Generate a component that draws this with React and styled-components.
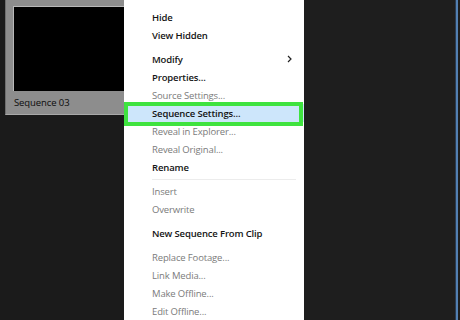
import styled, { createGlobalStyle } from 'styled-components';

const GlobalStyle = createGlobalStyle`
  html, body {
    margin: 0;
    padding: 0;
    background: #1c1c1c;
    overflow: hidden;
  }
`;

const Page = styled.div`
  display: flex;
  width: 460px;
  height: 320px;
  overflow: hidden;
  font-family: 'Open Sans', 'Noto Sans', sans-serif;
`;

const LeftSide = styled.div`
  width: 124px;
  flex-shrink: 0;
  background: #1b1b1b;
`;

const ProjectPanel = styled.div`
  margin-left: 5px;
  height: 115px;
  padding: 6px 0 0 7px;
  box-sizing: border-box;
  background: #8d8d8d;
  border-left: 1px solid #6e6e6e;
  border-bottom: 1px solid #a9a9a9;
  overflow: hidden;
`;

const Thumbnail = styled.div`
  width: 120px;
  height: 84px;
  background: #000;
  border-top: 1px solid #b8b8b8;
  border-left: 1px solid #b8b8b8;
`;

const ClipLabel = styled.div`
  margin-top: 6px;
  padding-left: 1px;
  font-size: 9.5px;
  line-height: 12px;
  letter-spacing: -0.1px;
  color: #0c0c0c;
`;

const Menu = styled.div`
  width: 180px;
  flex-shrink: 0;
  background: #fff;
  padding-top: 8px;
  box-sizing: border-box;
`;

const Item = styled.div`
  position: relative;
  display: flex;
  align-items: center;
  justify-content: space-between;
  height: 18px;
  padding: 0 12px 0 28px;
  font-size: 9.5px;
  letter-spacing: -0.15px;
  font-weight: ${p => (p.$disabled ? 400 : 600)};
  color: ${p => (p.$disabled ? '#7b7b7b' : '#141414')};
  background: ${p => (p.$active ? '#cde6fb' : 'transparent')};
  white-space: nowrap;

  &::after {
    content: '';
    display: ${p => (p.$active ? 'block' : 'none')};
    position: absolute;
    top: -2px;
    bottom: -4px;
    left: 0;
    right: 1px;
    border: 4px solid #3fe33f;
  }
`;

const Gap = styled.div`
  height: 6px;
`;

const Separator = styled.div`
  height: 6px;
  display: flex;
  align-items: center;
  padding: 0 8px 0 28px;

  &::before {
    content: '';
    flex: 1;
    height: 1px;
    background: #ececec;
  }
`;

const RightSide = styled.div`
  flex: 1;
  display: flex;
  justify-content: flex-end;
  background: #1e1e1e;
`;

const Edge = styled.div`
  width: 2px;
  margin-right: 2px;
  background: #5280b3;
  border-left: 1px solid #2a3b50;
`;

const Chevron = () => (
  <svg width="5" height="8" viewBox="0 0 5 8">
    <path d="M1 1 L4 4 L1 7" fill="none" stroke="#222" strokeWidth="1.2" />
  </svg>
);

const menu = [
  { label: 'Hide' },
  { label: 'View Hidden' },
  { gap: true },
  { label: 'Modify', sub: true },
  { label: 'Properties...' },
  { label: 'Source Settings...', disabled: true },
  { label: 'Sequence Settings...', active: true },
  { label: 'Reveal in Explorer...', disabled: true },
  { label: 'Reveal Original...', disabled: true },
  { label: 'Rename' },
  { sep: true },
  { label: 'Insert', disabled: true },
  { label: 'Overwrite', disabled: true },
  { gap: true },
  { label: 'New Sequence From Clip' },
  { gap: true },
  { label: 'Replace Footage...', disabled: true },
  { label: 'Link Media...', disabled: true },
  { label: 'Make Offline...', disabled: true },
  { label: 'Edit Offline...', disabled: true },
];

export default function App() {
  return (
    <>
      <GlobalStyle />
      <Page>
        <LeftSide>
          <ProjectPanel>
            <Thumbnail />
            <ClipLabel>Sequence 03</ClipLabel>
          </ProjectPanel>
        </LeftSide>
        <Menu>
          {menu.map((m, i) => {
            if (m.gap) return <Gap key={i} />;
            if (m.sep) return <Separator key={i} />;
            return (
              <Item key={i} $disabled={m.disabled} $active={m.active}>
                <span>{m.label}</span>
                {m.sub && <Chevron />}
              </Item>
            );
          })}
        </Menu>
        <RightSide>
          <Edge />
        </RightSide>
      </Page>
    </>
  );
}
